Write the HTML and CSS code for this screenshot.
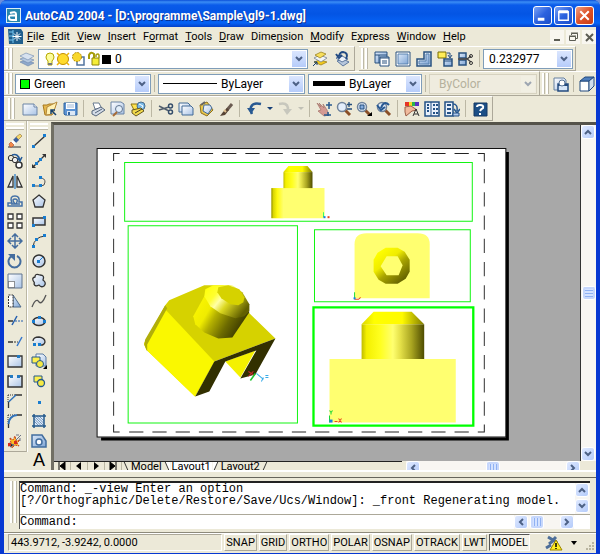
FILE: index.html
```html
<!DOCTYPE html>
<html lang="en">
<head>
<meta charset="utf-8">
<title>AutoCAD 2004 - [D:\programme\Sample\gl9-1.dwg]</title>
<link rel="stylesheet" href="styles.css">
</head>
<body>
<svg class="defs" width="0" height="0" aria-hidden="true">
  <defs>
    <linearGradient id="page" x1="0" y1="0" x2="1" y2="1"><stop offset="0" stop-color="#fff"/><stop offset="1" stop-color="#a9c3e6"/></linearGradient>
    <linearGradient id="blue" x1="0" y1="0" x2="1" y2="1"><stop offset="0" stop-color="#dbe8f8"/><stop offset="1" stop-color="#7fa5d5"/></linearGradient>
    <linearGradient id="edge"><stop offset="0" stop-color="#8c8800"/><stop offset=".15" stop-color="#d8d400"/><stop offset=".5" stop-color="#fffa10"/><stop offset="1" stop-color="#ffff70"/></linearGradient>
    <linearGradient id="cyl"><stop offset="0" stop-color="#c0bc00"/><stop offset=".08" stop-color="#f4f000"/><stop offset=".3" stop-color="#ffff20"/><stop offset=".5" stop-color="#ffff70"/><stop offset=".62" stop-color="#e4e048"/><stop offset=".8" stop-color="#a8a420"/><stop offset="1" stop-color="#4e4c00"/></linearGradient>
    <linearGradient id="cone"><stop offset="0" stop-color="#dcd800"/><stop offset=".2" stop-color="#ffff00"/><stop offset=".65" stop-color="#fffa00"/><stop offset="1" stop-color="#807c00"/></linearGradient>
    <linearGradient id="cylIso" x1="0" y1="0" x2="1" y2=".45"><stop offset="0" stop-color="#fffa00"/><stop offset=".35" stop-color="#f0ec00"/><stop offset=".5" stop-color="#b4b000"/><stop offset=".75" stop-color="#6c6a00"/><stop offset="1" stop-color="#3c3a00"/></linearGradient>
    <linearGradient id="coneIso" x1="0" y1="0" x2="1" y2=".6"><stop offset="0" stop-color="#ffff00"/><stop offset=".3" stop-color="#ffff30"/><stop offset=".45" stop-color="#ffffa8"/><stop offset=".62" stop-color="#dcd820"/><stop offset="1" stop-color="#626000"/></linearGradient>
    <linearGradient id="ring" x1=".15" y1=".1" x2=".8" y2=".9"><stop offset="0" stop-color="#ffff00"/><stop offset=".35" stop-color="#f0ec00"/><stop offset=".6" stop-color="#a8a400"/><stop offset="1" stop-color="#686600"/></linearGradient>
    <symbol id="down" viewBox="0 0 8 6"><path d="M1 1l3 3 3-3" fill="none" stroke="#4d6185" stroke-width="2"/></symbol>
    <symbol id="up" viewBox="0 0 8 6"><path d="M1 5l3-3 3 3" fill="none" stroke="#4d6185" stroke-width="2"/></symbol>
    <symbol id="left" viewBox="0 0 6 8"><path d="M5 1L2 4l3 3" fill="none" stroke="#4d6185" stroke-width="2"/></symbol>
    <symbol id="right" viewBox="0 0 6 8"><path d="M1 1l3 3-3 3" fill="none" stroke="#4d6185" stroke-width="2"/></symbol>
    <symbol id="glass" viewBox="0 0 16 16"><path d="M9 9l5 5" stroke="#8a4f28" stroke-width="3"/><circle cx="6" cy="6" r="4.5" fill="#e3eefb" stroke="#71849c" stroke-width="1.5"/></symbol>
  </defs>
</svg>
<div class="window">
  <header class="titlebar">
    <svg class="app" viewBox="0 0 15 15"><rect width="15" height="15" fill="#d9eef5"/><rect x="1" y="1" width="13" height="13" fill="#2786ac"/><path d="M4 5q6-2 6 1v6H6q-3 0-3-2.500T6 7.500h4" fill="none" stroke="#fff" stroke-width="2"/></svg>
    <h1>AutoCAD 2004 - [D:\programme\Sample\gl9-1.dwg]</h1>
    <button class="cap" aria-label="Minimize"><svg viewBox="0 0 18 18"><path d="M4 13h7" stroke="#fff" stroke-width="3"/></svg></button>
    <button class="cap" aria-label="Maximize"><svg viewBox="0 0 18 18"><path d="M4 5h10v9H4zM4 5h10" fill="none" stroke="#fff" stroke-width="1.500"/><path d="M4 5h10" stroke="#fff" stroke-width="3"/></svg></button>
    <button class="cap close" aria-label="Close"><svg viewBox="0 0 18 18"><path d="M4.500 4.500l9 9M13.500 4.500l-9 9" stroke="#fff" stroke-width="2.200"/></svg></button>
  </header>

  <nav class="menubar">
    <svg class="doc" viewBox="0 0 15 15"><path d="M0 0h13l2 3v12H1z" fill="#205f8d"/><path d="M1 3h4M1 7h5M1 11h4M5 1v13" stroke="#75c7f3"/><path d="M9 3v9M4.500 7.500h9M6 4.500l6 6M12 4.500l-6 6" stroke="#fff"/></svg>
    <button><u>F</u>ile</button><button><u>E</u>dit</button><button><u>V</u>iew</button><button><u>I</u>nsert</button><button>F<u>o</u>rmat</button><button><u>T</u>ools</button><button><u>D</u>raw</button><button>Dime<u>n</u>sion</button><button><u>M</u>odify</button><button>E<u>x</u>press</button><button><u>W</u>indow</button><button><u>H</u>elp</button>
    <span class="mdi">
      <button aria-label="Minimize drawing"><svg viewBox="0 0 14 14"><path d="M4 10h6" stroke="#5c5c54" stroke-width="2"/></svg></button>
      <button aria-label="Restore drawing"><svg viewBox="0 0 14 14"><path d="M5.500 5V3.500h6v5H10M3.500 6.500h6v4h-6zM5 3h7M3 6h7" fill="none" stroke="#5c5c54"/></svg></button>
      <button aria-label="Close drawing"><svg viewBox="0 0 14 14"><path d="M4 4l7 7M11 4l-7 7" stroke="#5c5c54" stroke-width="2"/></svg></button>
    </span>
  </nav>

  <div class="row">
    <section class="bar layers" aria-label="Layers">
      <i class="grip"></i>
      <button class="tool wide" aria-label="Layer manager"><svg viewBox="0 0 16 16"><path d="M1 11l6-2 8 3-6 3z" fill="#8fa9cc" stroke="#6985a9" stroke-width=".6"/><path d="M1 8l6-2 8 3-6 3z" fill="#b5c8e0" stroke="#6985a9" stroke-width=".6"/><path d="M1 5l6-3 8 3-6 4z" fill="#d7e2f0" stroke="#6985a9" stroke-width=".6"/></svg></button>
      <div class="combo grow">
        <svg class="states" viewBox="0 0 70 16"><path d="M5 6a4 4 0 1 1 8 0q0 2-2 4v4H7v-4Q5 8 5 6z" fill="#fdfd9b" stroke="#b5a800"/><path d="M7 13h4" stroke="#777" stroke-width="2"/><circle cx="22" cy="8" r="5.500" fill="#ffdb2c" stroke="#c18e00"/><path d="M16 2l2 2M28 2l-2 2M16 14l2-2M28 14l-2-2" stroke="#efb400" stroke-width="1.500"/><path d="M36 6h7v8h-7z" fill="#fff" stroke="#52749f" stroke-width="1.500"/><circle cx="36" cy="6" r="4.500" fill="#f8d72c" stroke="#b38b00" stroke-dasharray="2 1"/><path d="M48 8V4q2-4 5-1v4" fill="none" stroke="#a69d0b" stroke-width="2"/><path d="M51 7h7v7h-7z" fill="#f5ed37" stroke="#8f850b"/><path d="M55 6V4q2-2 3 0v3" fill="none" stroke="#a69d0b" stroke-width="1.500"/><path d="M61 4h9v9h-9z" fill="#000"/></svg>
        <select aria-label="Layer"><option>0</option></select><span class="arrow"><svg><use href="#down"/></svg></span>
      </div>
      <button class="tool wide" aria-label="Make object layer current"><svg viewBox="0 0 16 16"><path d="M2 11l6-2 7 2-6 3z" fill="#f2c91d" stroke="#907512" stroke-width=".7"/><path d="M2 7l6-3 7 3-6 4z" fill="#f2f5f7" stroke="#69778a" stroke-width=".7"/><path d="M3 4l6-3 5 2-6 4z" fill="#f7df5c" stroke="#907512" stroke-width=".7"/><path d="M1 15l4-4M2 11h3v3" stroke="#153d70" fill="none"/></svg></button>
      <button class="tool wide" aria-label="Layer previous"><svg viewBox="0 0 16 16"><path d="M3 10l6-2 6 3-6 4z" fill="#b7c7dc" stroke="#5d789e"/><path d="M2 7l6-2 6 3-6 3z" fill="#eef3fa" stroke="#5d789e"/><path d="M12 8q3-6-3-7-3 0-4 4M2 3l3 4 3-3" fill="none" stroke="#234b83" stroke-width="2"/></svg></button>
    </section>
    <section class="bar views" aria-label="Viewports">
      <i class="grip"></i>
      <button class="tool vp" aria-label="Display viewports"><svg viewBox="0 0 16 16"><path d="M1 1h12v11H1zM1 4h12M5 4v8" fill="url(#blue)" stroke="#28517f"/><path d="M6 6h9v9H6z" fill="#fff" stroke="#28517f"/><path d="M6 7h9M8 10h5M8 12h5" stroke="#28517f"/></svg></button>
      <button class="tool vp" aria-label="Single viewport"><svg viewBox="0 0 16 16"><path d="M1 1h14v14H1z" fill="#fff" stroke="#28517f"/><path d="M3 3h10v10H3z" fill="url(#blue)" stroke="#5780ae"/></svg></button>
      <button class="tool vp" aria-label="Polygonal viewport"><svg viewBox="0 0 16 16"><path d="M8 1h7v14H1V8h7z" fill="url(#page)" stroke="#28517f" stroke-width="1.500"/><path d="M10 3h3v10H3v-3h7z" fill="url(#blue)" stroke="#5780ae"/></svg></button>
      <button class="tool vp" aria-label="Convert object to viewport"><svg viewBox="0 0 16 16"><path d="M1 1h8v6H1z" fill="#ffed57" stroke="#786c00"/><path d="M7 8h8v7H7z" fill="url(#blue)" stroke="#28517f" stroke-width="1.500"/><path d="M10 2h3v4M11 4l2 3 2-3M7 10h8" fill="none" stroke="#28517f"/></svg></button>
      <button class="tool vp" aria-label="Clip viewport"><svg viewBox="0 0 16 16"><path d="M1 2h7v5H1zM1 9h7v5H1z" fill="url(#blue)" stroke="#28517f" stroke-width="1.500"/><path d="M0 8h9l4-3M8 7l5 4" fill="none" stroke="#444" stroke-width="1.300"/><circle cx="13" cy="5" r="1.500" fill="none" stroke="#333"/><circle cx="13" cy="12" r="1.500" fill="none" stroke="#333"/></svg></button>
      <i class="sep"></i>
      <div class="combo scale"><select aria-label="Viewport scale"><option>0.232977</option></select><span class="arrow"><svg><use href="#down"/></svg></span></div>
    </section>
  </div>

  <div class="row">
    <section class="bar props" aria-label="Properties">
      <i class="grip"></i>
      <div class="combo c-color"><i class="swatch"></i><select aria-label="Color"><option>Green</option></select><span class="arrow"><svg><use href="#down"/></svg></span></div>
      <i class="sep"></i>
      <div class="combo c-type"><i class="line thin"></i><select aria-label="Linetype"><option>ByLayer</option></select><span class="arrow"><svg><use href="#down"/></svg></span></div>
      <div class="combo c-weight"><i class="line thick"></i><select aria-label="Lineweight"><option>ByLayer</option></select><span class="arrow"><svg><use href="#down"/></svg></span></div>
      <i class="sep"></i>
      <div class="combo c-plot disabled"><select aria-label="Plot style" disabled><option>ByColor</option></select><span class="arrow"><svg><use href="#down"/></svg></span></div>
    </section>
    <section class="bar rest" aria-label="Views">
      <i class="grip"></i>
      <button class="tool big" aria-label="Named views"><svg viewBox="0 0 16 16"><path d="M1 2h10l2 2v10H1z" fill="url(#page)" stroke="#66809f"/><path d="M5 8h10v7H5z" fill="#d7e6f8" stroke="#234b7f" stroke-width="1.500"/><path d="M5 9h10" stroke="#234b7f" stroke-width="2"/><circle cx="9" cy="7" r="3" fill="#fff" stroke="#567294"/></svg></button>
      <i class="sep"></i>
      <button class="tool big" aria-label="Top view"><svg viewBox="0 0 16 16"><path d="M1 5h9v10H1z" fill="#fff" stroke="#234b7f"/><path d="M1 5l5-4h9l-5 4z" fill="#4e7fbd" stroke="#234b7f"/><path d="M10 5l5-4v9l-5 5z" fill="#d1dfed" stroke="#234b7f"/></svg></button>
    </section>
  </div>

  <div class="row">
    <section class="bar standard" aria-label="Standard">
      <i class="grip"></i>
      <button class="tool" aria-label="New"><svg viewBox="0 0 16 16"><path d="M1 3h11l3 3v8H1z" fill="url(#page)" stroke="#6b84a5"/><path d="M12 3v3h3" fill="#fff" stroke="#6b84a5"/></svg></button>
      <button class="tool" aria-label="Open"><svg viewBox="0 0 16 16"><path d="M1 4h4l2-1h7l-4 11H3z" fill="#e5b84e" stroke="#a8791e"/><path d="M5 6l10-5-4 12-7 1z" fill="#fff1b3" stroke="#b3883a"/><path d="M14 14L9 9M9 13V9h4" stroke="#17416f" stroke-width="1.500" fill="none"/></svg></button>
      <button class="tool" aria-label="Save"><svg viewBox="0 0 16 16"><path d="M2 2h13v12H3l-1-1z" fill="#5c93d3" stroke="#31649e"/><path d="M4 2h9v6H4z" fill="#fff"/><path d="M5 4h7M5 6h7" stroke="#9db8d7"/><path d="M5 10h8v4H5z" fill="#dbe7f5"/><path d="M6 11h2v3H6z" fill="#31649e"/></svg></button>
      <i class="sep"></i>
      <button class="tool" aria-label="Plot"><svg viewBox="0 0 16 16"><path d="M3 2h6l3 6H5z" fill="#fff" stroke="#687a8f"/><path d="M2 10l9-4 4 3-9 6-4-2z" fill="#d4dce7" stroke="#54657b"/><path d="M5 12l7-4" stroke="#54657b"/></svg></button>
      <button class="tool" aria-label="Plot preview"><svg viewBox="0 0 16 16"><path d="M1 1h10l3 2v10H1z" fill="url(#page)" stroke="#6b84a5"/><circle cx="9" cy="8" r="3.500" fill="#e3effa" stroke="#60748e"/><path d="M7 11l-4 4" stroke="#a76b37" stroke-width="2"/></svg></button>
      <button class="tool" aria-label="Publish"><svg viewBox="0 0 16 16"><path d="M1 3h6l4 6H4z" fill="#ffe34c" stroke="#8c7413"/><circle cx="11" cy="5" r="4" fill="#78b9e7" stroke="#496b8a"/><path d="M9 3l4 2-2 3" stroke="#fff" fill="none"/><path d="M2 9l9-2 3 3-8 5-4-3z" fill="#f2d94a" stroke="#655722"/><path d="M5 12l7-4" stroke="#453e20"/></svg></button>
      <i class="sep"></i>
      <button class="tool" aria-label="Cut"><svg viewBox="0 0 16 16"><path d="M1 5l10 5M1 9l10-3" stroke="#53606f" stroke-width="1.500"/><circle cx="12.500" cy="5" r="2" fill="none" stroke="#354e6b" stroke-width="1.500"/><circle cx="12.500" cy="11" r="2" fill="none" stroke="#354e6b" stroke-width="1.500"/></svg></button>
      <button class="tool" aria-label="Copy"><svg viewBox="0 0 16 16"><path d="M1 2h9l2 2v7H1z" fill="url(#page)" stroke="#426a96"/><path d="M4 5h9l2 2v7H4z" fill="url(#page)" stroke="#426a96"/></svg></button>
      <button class="tool" aria-label="Paste"><svg viewBox="0 0 16 16"><path d="M2 4l7-3 6 8-6 6-6-3z" fill="#eac64c" stroke="#8e711e"/><path d="M6 4h6l2 3-4 6-5-3z" fill="url(#page)" stroke="#426a96"/><path d="M3 4l4-3" stroke="#666" stroke-width="2"/></svg></button>
      <button class="tool" aria-label="Match properties"><svg viewBox="0 0 16 16"><path d="M14 3L9 9" stroke="#6a5b52" stroke-width="3"/><path d="M9 7l2 2-4 5-5 1 3-4z" fill="#564335"/><path d="M6 9l2 2" stroke="#e0c18f" stroke-width="2"/></svg></button>
      <i class="sep"></i>
      <button class="tool" aria-label="Undo"><svg viewBox="0 0 16 16"><path d="M15 3Q7 1 5 6q-1 3 1 7" fill="none" stroke="#285992" stroke-width="2.500"/><path d="M1 7h8l-4 6z" fill="#285992"/></svg></button>
      <button class="tool tiny" aria-label="Undo list"><svg viewBox="0 0 6 16"><path d="M0 6h6L3 9z" fill="#153f77"/></svg></button>
      <button class="tool" aria-label="Redo" disabled><svg viewBox="0 0 16 16"><path d="M2 3q8-2 9 4l-1 4" fill="none" stroke="#c7c7bd" stroke-width="2.500"/><path d="M6 8h9l-5 6z" fill="#c7c7bd"/></svg></button>
      <button class="tool tiny" aria-label="Redo list" disabled><svg viewBox="0 0 6 16"><path d="M0 6h6L3 9z" fill="#c0c0b5"/></svg></button>
      <i class="sep"></i>
      <button class="tool" aria-label="Pan"><svg viewBox="0 0 16 16"><path d="M1 2l4 4-2-4 5 5-1-4 4 6 2 5-5 1-6-5 3-1z" fill="#d49a93" stroke="#a8786f" stroke-width=".8"/><path d="M13 1v7M10 4h6M8 14h7M12 11v4" stroke="#28598f" stroke-width="1.500"/></svg></button>
      <button class="tool" aria-label="Zoom realtime"><svg viewBox="0 0 16 16"><use href="#glass"/><path d="M13 1v5M11 3.500h5M11 8h5" stroke="#244e7c" stroke-width="1.300"/></svg></button>
      <button class="tool" aria-label="Zoom window"><svg viewBox="0 0 16 16"><use href="#glass"/><path d="M4 4h4v4H4z" fill="#87aee0" stroke="#244e7c"/><path d="M11 15h5v-4z" fill="#000"/></svg></button>
      <button class="tool" aria-label="Zoom previous"><svg viewBox="0 0 16 16"><use href="#glass"/><path d="M13 4Q8-1 5 7M1 4l4 5 4-3" fill="none" stroke="#285992" stroke-width="2"/></svg></button>
      <i class="sep"></i>
      <button class="tool" aria-label="Properties"><svg viewBox="0 0 16 16"><path d="M1 1h4v4H1z" fill="#e63426"/><path d="M5 1h3v4H5z" fill="#f7dc24"/><path d="M8 1h3v4H8z" fill="#29b44e"/><path d="M11 1h4v4h-4z" fill="#5932c1"/><path d="M1 6l6-1 6 4-5 1-6 5-1-4z" fill="#f0ba9c" stroke="#9b5d45"/><path d="M9 15l3-7 3 7M10 13h4" fill="none" stroke="#333"/></svg></button>
      <button class="tool" aria-label="DesignCenter"><svg viewBox="0 0 16 16"><path d="M1 1h14v14H1z" fill="#e9f1fb" stroke="#235185" stroke-width="1.500"/><path d="M7 1v14" stroke="#235185"/><path d="M3 4h2M3 7h2M3 10h2M9 4h2M12 4h2M9 8h2M12 8h2M9 12h2M12 12h2" stroke="#235185" stroke-width="2"/></svg></button>
      <button class="tool" aria-label="Tool palettes"><svg viewBox="0 0 16 16"><path d="M1 1h8v14H1z" fill="#e9f1fb" stroke="#235185" stroke-width="1.500"/><path d="M3 4h4M3 8h4M3 12h4" stroke="#235185" stroke-width="2"/><path d="M9 3q5 0 4 7M10 8l3 4 3-4" fill="none" stroke="#285992" stroke-width="1.500"/><path d="M9 12h6v3H9z" fill="#b3cbed" stroke="#235185"/></svg></button>
      <i class="sep"></i>
      <button class="tool" aria-label="Help"><svg viewBox="0 0 16 16"><path d="M2 2h13v13H2z" fill="#1c4f86" stroke="#143962"/><path d="M5 6q0-2 3-2 4 0 3 3-2 1-3 3M8 12v2" fill="none" stroke="#fff" stroke-width="2"/></svg></button>
    </section>
  </div>

  <main class="work">
    <aside class="side modify" aria-label="Modify">
      <i class="hgrip"></i>
      <button aria-label="Erase"><svg viewBox="0 0 16 16"><path d="M1 14h13" stroke="#333"/><path d="M9 4l4-3 2 2-4 4z" fill="#f6d76a" stroke="#8b6e3e" stroke-width=".6"/><path d="M6 7l3-3 3 3-3 3z" fill="#3b5f9c"/><path d="M6 7L4 9l3 3 2-2z" fill="#fff"/><path d="M2 11l2-2 3 3-2 2H3z" fill="#f48c4b" stroke="#a34632" stroke-width=".6"/></svg></button>
      <button aria-label="Copy object"><svg viewBox="0 0 16 16" fill="none" stroke="#333"><circle cx="4" cy="5" r="2.700"/><circle cx="8" cy="7" r="2.700" fill="#eee"/><circle cx="12" cy="12" r="3" fill="#fff" stroke-width="1.500"/><path d="M5 2q6-2 8 5M10 5l3 3 2-4" stroke="#245a98" stroke-width="1.500"/></svg></button>
      <button aria-label="Mirror"><svg viewBox="0 0 16 16"><path d="M6 3v11H1zM10 3v11h5z" fill="#eef2f8" stroke="#333" stroke-width="1.300"/><path d="M8 1v15" stroke="#2f80c9" stroke-width="1.300"/></svg></button>
      <button aria-label="Offset"><svg viewBox="0 0 16 16" fill="none"><path d="M1 13v-3h4Q2 3 8 3q5 0 4 6h3v4z" stroke="#4370a6" stroke-width="1.500"/><path d="M4 11h4Q4 6 8 6q4 0 1 5h4" stroke="#4370a6" stroke-width="1.500"/></svg></button>
      <button aria-label="Array"><svg viewBox="0 0 16 16"><path d="M1 1h5v5H1zM10 1h5v5h-5zM1 10h5v5H1zM10 10h5v5h-5z" fill="#fff" stroke="#333" stroke-width="1.300"/></svg></button>
      <button aria-label="Move"><svg viewBox="0 0 16 16"><path d="M8 2v12M2 8h12M5 4l3-3 3 3M5 12l3 3 3-3M4 5L1 8l3 3M12 5l3 3-3 3" fill="none" stroke="#446d9e" stroke-width="1.500"/></svg></button>
      <button aria-label="Rotate"><svg viewBox="0 0 16 16"><path d="M5 3A6 6 0 1 0 10 3" fill="none" stroke="#446d9e" stroke-width="2"/><path d="M1 1h7v7z" fill="#446d9e"/></svg></button>
      <button aria-label="Scale"><svg viewBox="0 0 16 16"><path d="M1 1h14v14H1z" fill="url(#page)" stroke="#60758f"/><path d="M1.500 8.500h6v6h-6z" fill="#fff" stroke="#333" stroke-dasharray="1 1"/></svg></button>
      <button aria-label="Stretch"><svg viewBox="0 0 16 16"><path d="M6 2l8 12H6z" fill="url(#blue)" stroke="#4f6b8b"/><path d="M1.500 2H6v12H1.500z" fill="#fff" stroke="#333" stroke-dasharray="2 1"/></svg></button>
      <button aria-label="Trim"><svg viewBox="0 0 16 16"><path d="M1 8h5" stroke="#333" stroke-width="1.500"/><path d="M8 8h8" stroke="#245fae" stroke-dasharray="2 1"/><path d="M5 12l5-9" stroke="#245fae" stroke-width="1.500"/></svg></button>
      <button aria-label="Extend"><svg viewBox="0 0 16 16"><path d="M1 9h5" stroke="#333" stroke-width="1.500"/><path d="M7 9h4" stroke="#333" stroke-dasharray="2 1"/><path d="M10 13l5-9" stroke="#3476cc" stroke-width="1.500"/></svg></button>
      <button aria-label="Break at point"><svg viewBox="0 0 16 16"><path d="M1 3h14v11H1z" fill="url(#page)" stroke="#333" stroke-width="1.300"/><path d="M10 2h3v3h-3z" fill="#247ac0"/></svg></button>
      <button aria-label="Break"><svg viewBox="0 0 16 16"><path d="M4 3H1v11h14V3h-3" fill="url(#page)" stroke="#333" stroke-width="1.500"/><path d="M3 2h3v3H3zM10 2h3v3h-3z" fill="#247ac0"/></svg></button>
      <button aria-label="Chamfer"><svg viewBox="0 0 16 16" fill="none"><path d="M1 2h8M1 2v8" stroke="#333" stroke-dasharray="1 1"/><path d="M1.500 9v6M8 2h7" stroke="#333" stroke-width="1.300"/><path d="M1.500 9L9 2" stroke="#3072ba" stroke-width="1.500"/></svg></button>
      <button aria-label="Fillet"><svg viewBox="0 0 16 16" fill="none"><path d="M1 2h8M1 2v8" stroke="#333" stroke-dasharray="1 1"/><path d="M1.500 10v5M10 2h5" stroke="#333" stroke-width="1.300"/><path d="M1.500 11Q2 3 10 2" stroke="#3072ba" stroke-width="2"/></svg></button>
      <button aria-label="Explode"><svg viewBox="0 0 16 16"><path d="M3 5l3 2 2-4 1 5 4-1-3 3 2 3-4-1-3 3v-3l-4 1 3-3z" fill="#ffbd22" stroke="#c33e21" stroke-dasharray="2 1"/><path d="M9 7l5-5M9 2h3M13 5v3M2 10l5 2-4 2" stroke="#6e7588"/><path d="M1 10h3v3H1zM7 8h3v3H7z" fill="#d52d1f"/></svg></button>
    </aside>
    <aside class="side draw" aria-label="Draw">
      <i class="hgrip"></i>
      <button aria-label="Line"><svg viewBox="0 0 16 16"><path d="M3 13L14 3" stroke="#333" stroke-width="1.300"/><path d="M1 12h3v3H1zM12 1h3v3h-3z" fill="#187dd0"/></svg></button>
      <button aria-label="Construction line"><svg viewBox="0 0 16 16"><path d="M2 14L14 2" stroke="#333" stroke-width="1.300"/><path d="M1 15v-4l4 4zM15 1v4l-4-4z" fill="#333"/><path d="M4 9h3v3H4zM8 5h3v3H8z" fill="#187dd0"/></svg></button>
      <button aria-label="Polyline"><svg viewBox="0 0 16 16"><path d="M3 13h7q4 0 4-4t-5-4" fill="none" stroke="#555"/><path d="M1 11h3v3H1zM8 11h3v3H8zM8 3h3v3H8z" fill="#187dd0"/></svg></button>
      <button aria-label="Polygon"><svg viewBox="0 0 16 16"><path d="M8 2l6 5-2 7H4L2 7z" fill="url(#page)" stroke="#333" stroke-width="1.300"/></svg></button>
      <button aria-label="Rectangle"><svg viewBox="0 0 16 16"><path d="M2 5h12v7H2z" fill="url(#page)" stroke="#333" stroke-width="1.500"/><path d="M1 11h3v3H1zM12 3h3v3h-3z" fill="#187dd0"/></svg></button>
      <button aria-label="Arc"><svg viewBox="0 0 16 16"><path d="M2 14Q3 4 14 3" fill="none" stroke="#333"/><path d="M1 12h3v3H1zM4 5h3v3H4zM12 1h3v3h-3z" fill="#187dd0"/></svg></button>
      <button aria-label="Circle"><svg viewBox="0 0 16 16"><circle cx="8" cy="8" r="6" fill="url(#page)" stroke="#333" stroke-width="1.500"/><path d="M8 8l4-4" stroke="#187dd0"/><path d="M6 7h3v3H6z" fill="#187dd0"/></svg></button>
      <button aria-label="Revision cloud"><svg viewBox="0 0 16 16"><path d="M3 9q-3-4 1-5 0-4 5-2 5 0 3 5 4 3 1 6-3 2-5-1-4 2-5-1 1-1 0-2z" fill="url(#page)" stroke="#333" stroke-width="1.300"/></svg></button>
      <button aria-label="Spline"><svg viewBox="0 0 16 16"><path d="M1 14q4-10 7-5 3 3 7-7" fill="none" stroke="#555" stroke-width="1.300"/></svg></button>
      <button aria-label="Ellipse"><svg viewBox="0 0 16 16"><ellipse cx="8" cy="8.500" rx="6" ry="4" fill="url(#page)" stroke="#333" stroke-width="1.500"/><path d="M1 7h3v3H1zM12 7h3v3h-3zM7 3h3v3H7z" fill="#187dd0"/></svg></button>
      <button aria-label="Ellipse arc"><svg viewBox="0 0 16 16"><path d="M2 8q0-4 6-4 6 1 6 5-1 4-6 3" fill="url(#page)" stroke="#333" stroke-width="1.300"/><path d="M2 10h3v3H2zM7 10h3v3H7z" fill="#187dd0"/></svg></button>
      <button aria-label="Insert block"><svg viewBox="0 0 16 16"><path d="M5 1h7l3 3v9H5z" fill="url(#page)" stroke="#5c7da5"/><path d="M1 4h8v6H1z" fill="#fff14d" stroke="#24598c"/><circle cx="9" cy="11" r="3.500" fill="#f5e943" stroke="#24598c"/><path d="M12 16h4v-4z"/></svg></button>
      <button aria-label="Make block"><svg viewBox="0 0 16 16"><path d="M3 3h8v6H3z" fill="#fff14d" stroke="#24598c"/><circle cx="10" cy="10" r="3.500" fill="#f5e943" stroke="#24598c" stroke-width="1.300"/></svg></button>
      <button aria-label="Point"><svg viewBox="0 0 16 16"><path d="M7 8h3v3H7z" fill="#187dd0"/></svg></button>
      <button aria-label="Hatch"><svg viewBox="0 0 16 16"><path d="M3 3h10v10H3z" fill="#dce9f7"/><path d="M3 3l10 10M3 8l5 5M8 3l5 5M3 5.500l7.500 7.500M5.500 3l7.500 7.500" stroke="#5b82ae" stroke-width=".8"/><path d="M1 3h14M1 13h14M3 1v14M13 1v14" stroke="#24598c" stroke-width="1.500"/></svg></button>
      <button aria-label="Region"><svg viewBox="0 0 16 16"><path d="M1 2h10l4 6v6H1z" fill="url(#blue)" stroke="#426d9e" stroke-width="1.500"/><circle cx="8" cy="9" r="3" fill="#fff" stroke="#426d9e" stroke-width="1.500"/></svg></button>
      <button class="text-tool" aria-label="Multiline text">A</button>
    </aside>

    <div class="viewer">
      <div class="canvas">
        <svg viewBox="54 125 525 335" role="img" aria-label="Layout with four viewports of a clamp part">
          <path d="M101 438.500h405.500V152" fill="none" stroke="#000" stroke-width="3"/>
          <path d="M97 148.500h408v288H97z" fill="#fff" stroke="#111"/>
          <path d="M113.500 161v-7.500h6M477 153.500h6.500v8M113.500 424v7.500h6M477 431.500h6.500V424" fill="none" stroke="#222"/>
          <path d="M129 153.500h344M129 431.500h344" stroke="#222" stroke-dasharray="14.200 9"/>
          <path d="M113.500 169v251M483.500 169v251" stroke="#333" stroke-dasharray="14.200 9"/>
          <g fill="none" stroke="#12f512"><path d="M124.500 162.500h347v58.500h-347zM128 225.500h169v197H128zM314 229.500h155.500v72H314z"/><path d="M313 307h159.500v118H313z" stroke="#00ff00" stroke-width="2.300"/></g>

          <path d="M271 188h53v30h-53z" fill="#ffff70"/><path d="M271 188h12v30h-12z" fill="url(#edge)"/>
          <path d="M283 172h29v16h-29z" fill="url(#cyl)"/><path d="M283 172l5-6h19l5 6z" fill="url(#cone)"/>
          <path d="M323 217v-5" stroke="#3f6"/><path d="M323 216h2v2h-2z" fill="#167be8"/><path d="M327 216h2v2h-2z" fill="#e8451d"/>

          <path d="M144 343l21-38 4-5 35-15h27l18 28 26 25-61 23-19 35-49-47z" fill="#d6d200"/>
          <path d="M164 308l50 53-19.500 35L148 351q-4-5-4-8z" fill="#faf800"/>
          <path d="M144 344l1-5 20-34 2 3-20 36v7z" fill="#b1ae0a"/>
          <path d="M225 361l30-11-15 27z" fill="#f4f100"/>
          <path d="M214 361l61-23-20 36-15 4 16-28-31 11-16 30-14 5z" fill="#323000"/>
          <path d="M204 296l-11 20 2 8 9 8 14 6 14-1 17-25z" fill="url(#cylIso)"/>
          <path d="M204 296l1-7 8-4h19l10 7 7 12v7l-5 5-9 2-15-5-10-7z" fill="url(#coneIso)"/>
          <path d="M218 287l10-2 11 4 5 8-1 5-5 3-8-1-9-6-4-6z" fill="#d6d200"/>
          <path d="M248 371l6 4M253 371l-5 5" stroke="#c7282b"/><path d="M250 380l5-7" stroke="#1bc52d" stroke-width="1.500"/><path d="M256 373l7 6M263 377l-2 4M265 375h3M265 377h3" stroke="#38abe8"/>

          <path d="M354 298v-54q0-11 12-11h51q12 0 12 11v54z" fill="#ffff70"/>
          <path d="M385 247.500h12l7 4 5 8v12l-4 7-8 5h-12l-7-4-5-8v-12l4-7z" fill="url(#ring)"/><path d="M386 256h11l5 9-4 10h-12l-6-9z" fill="#ffff70"/>
          <path d="M354 299v-7" stroke="#20db42"/><path d="M354 299h4l2-2" stroke="#e9471c" fill="none"/><path d="M353 297h2v2h-2z" fill="#167be8"/>

          <path d="M329 358.500h126v63.500H329z" fill="#ffff70"/><path d="M361 324h62.500v34.500H361z" fill="url(#cyl)"/><path d="M361 324l12-12.500h38L423.500 324z" fill="url(#cone)"/>
          <path d="M329 422v-7M329 410l1.500 2 1.500-2M330.500 412v2" stroke="#15d735" fill="none"/><path d="M329 419h3v3h-3z" fill="#167be8"/><path d="M334 421h3M338 418l3 4M341 418l-3 4" stroke="#e9471c"/>
        </svg>
      </div>
      <div class="vscroll"><button class="sb" aria-label="Scroll up"><svg><use href="#up"/></svg></button><span class="track"><i class="thumb"></i></span><button class="sb" aria-label="Scroll down"><svg><use href="#down"/></svg></button></div>
      <div class="tabs">
        <div class="navs"><button aria-label="First tab"><svg viewBox="0 0 8 8"><path d="M1 0v8M7 0v8L2 4z" stroke="#000"/></svg></button><button aria-label="Previous tab"><svg viewBox="0 0 8 8"><path d="M6 0v8L1 4z"/></svg></button><button aria-label="Next tab"><svg viewBox="0 0 8 8"><path d="M2 0v8l5-4z"/></svg></button><button aria-label="Last tab"><svg viewBox="0 0 8 8"><path d="M1 0v8l5-4zM7 0v8" stroke="#000"/></svg></button></div>
        <svg class="edge" viewBox="0 0 6 9"><path d="M1 0l4 9" stroke="#222"/></svg><button>Model</button>
        <svg class="edge" viewBox="0 0 6 9"><path d="M1 0h6v9H5z" fill="#fff"/><path d="M1 0l4 9" stroke="#222"/></svg><button class="on">Layout1</button>
        <svg class="edge" viewBox="0 0 6 9"><path d="M-1 0h6L1 9h-2z" fill="#fff"/><path d="M5 0L1 9" stroke="#222"/></svg><button>Layout2</button>
        <svg class="edge" viewBox="0 0 6 9"><path d="M5 0L1 9" stroke="#222"/></svg>
        <i class="rule"></i>
        <div class="hscroll"><button class="sb" aria-label="Scroll left"><svg class="h"><use href="#left"/></svg></button><span class="track"><i class="thumb"></i></span><button class="sb" aria-label="Scroll right"><svg class="h"><use href="#right"/></svg></button></div>
      </div>
    </div>
  </main>

  <section class="command" aria-label="Command line">
    <i class="grip"></i>
    <div class="console">
      <div class="history"><pre>Command: _-view Enter an option
[?/Orthographic/Delete/Restore/Save/Ucs/Window]: _front Regenerating model.</pre>
        <div class="vscroll mini"><button class="sb" aria-label="History up"><svg><use href="#up"/></svg></button><button class="sb" aria-label="History down"><svg><use href="#down"/></svg></button></div>
      </div>
      <div class="prompt"><label for="cmd">Command:</label><input id="cmd" type="text">
        <div class="hscroll mini"><button class="sb" aria-label="Prompt left"><svg class="h"><use href="#left"/></svg></button><i class="thumb"></i><span class="track"></span><button class="sb" aria-label="Prompt right"><svg class="h"><use href="#right"/></svg></button></div>
      </div>
    </div>
  </section>

  <footer class="status">
    <output>443.9712, -3.9242, 0.0000</output>
    <button>SNAP</button><button>GRID</button><button>ORTHO</button><button>POLAR</button><button>OSNAP</button><button>OTRACK</button><button>LWT</button><button class="pressed">MODEL</button>
    <span class="tray"><svg viewBox="0 0 20 16"><path d="M4 2l5 3 3-3M5 9l5-4 3 3M2 13l5-3" stroke="#4d6e99" stroke-width="3" fill="none"/><path d="M12 5l6 10H6z" fill="#ffef21" stroke="#9c8500"/><path d="M12 8v4M12 13v1" stroke="#000" stroke-width="1.500"/></svg></span>
    <button class="more" aria-label="Tray menu"><svg viewBox="0 0 6 4"><path d="M0 0h6L3 4z"/></svg></button>
    <svg class="size" viewBox="0 0 10 10"><path d="M7 1h2v2H7zM4 4h2v2H4zM7 4h2v2H7zM1 7h2v2H1zM4 7h2v2H4zM7 7h2v2H7z" fill="#b8b49f"/></svg>
  </footer>
</div>
</body>
</html>
```
FILE: styles.css
```css
* { box-sizing: border-box; }
body { margin: 0; background: #6b8fdc; font: 11px/14px Roboto, "Liberation Sans", sans-serif; color: #000; }
button, select, input { font: inherit; color: inherit; margin: 0; padding: 0; border: 0; background: none; border-radius: 0; outline: 0; }
svg { display: block; flex: none; }
i { display: block; flex: none; }
.defs { position: absolute; }

.window { min-height: 100vh; display: flex; flex-direction: column; padding: 0 4px 4px; background: #0738d2; border-radius: 7px 7px 0 0; overflow: hidden; }

.titlebar { height: 27px; margin: 0 -4px; padding: 4px 6px 0; display: flex; align-items: center; gap: 2px; background: linear-gradient(#0b4fd8, #3b8df5 2px, #0a5bea 5px, #0455e4 14px, #0662f5 23px, #0440c8); }
.titlebar .app { width: 15px; height: 15px; }
.titlebar h1 { flex: 1; min-width: 0; margin: 0 0 0 2px; font: bold 12px/18px Roboto, sans-serif; color: #fff; text-shadow: 1px 1px #0a2f91; white-space: nowrap; overflow: hidden; }
.cap { width: 19px; height: 19px; border: 1px solid #fff; border-radius: 3px; background: linear-gradient(135deg, #7ba3f5, #2c62df 50%, #1c4ec8); }
.cap.close { background: linear-gradient(135deg, #f0a083, #dd5228 50%, #c83c14); }
.cap svg { width: 17px; height: 17px; }

.menubar { height: 19px; padding-left: 4px; display: flex; align-items: center; gap: 7px; background: #ece9d8; }
.menubar .doc { width: 15px; height: 15px; margin-right: -3px; }
.mdi { margin-left: auto; display: flex; gap: 2px; }
.mdi button { width: 14px; height: 14px; background: #f8f6f0; }

.row { display: flex; gap: 4px; height: 25px; background: #ece9d8; }
.bar { display: flex; align-items: center; padding: 0 2px; border-top: 1px solid #fff; border-right: 1px solid #aca899; border-bottom: 1px solid #aca899; }
.grip { width: 6px; height: 21px; border: solid #fff; border-width: 0 2px; box-shadow: 1px 0 #bdb9a8, inset 1px 0 #bdb9a8; }
.sep { width: 1px; height: 17px; background: #bbb7a4; }
.tool { flex: none; width: 20px; height: 20px; display: grid; place-items: center; }
.tool svg { width: 16px; height: 16px; }
.tool.tiny { width: 11px; }
.tool.tiny svg { width: 6px; }
.tool.wide, .tool.vp { width: 21px; }
.tool.big { width: 25px; }

.combo { display: flex; align-items: center; height: 20px; background: #fff; border: 1px solid #7f9db9; padding: 1px; min-width: 0; }
.combo select { appearance: none; flex: 1; min-width: 0; height: 16px; padding-left: 4px; font-size: 12px; opacity: 1; }
.arrow { flex: none; width: 14px; height: 16px; display: grid; place-items: center; background: linear-gradient(#dbe6fe, #b6ccfa); pointer-events: none; }
.arrow svg, .sb svg { width: 8px; height: 6px; }
.sb svg.h { width: 6px; height: 8px; }
.combo .states { width: 70px; height: 16px; margin-left: 1px; }
.combo.disabled { background: #efecdf; border-color: #d6d2c0; color: #b5b19d; }
.combo.disabled .arrow { background: #f4f2e8; opacity: .5; }
.combo.disabled select { padding-left: 8px; }
.swatch { width: 10px; height: 10px; margin-left: 3px; background: #0f0; border: 1px solid #000; }
.line { margin-left: 3px; background: #000; }
.thin { width: 54px; height: 1px; }
.thick { width: 32px; height: 5px; }

.layers { flex: 0 1 351px; gap: 1px; }
.layers .grip { margin-right: 3px; }
.layers .grow { flex: 1; }
.views .grip { margin-right: 4px; }
.views .sep { margin: 0 3px; }
.scale { width: 90px; }
.props { gap: 3px; }
.c-color { width: 136px; }
.c-type { width: 147px; }
.c-weight { width: 114px; }
.c-plot { width: 108px; }
.rest { flex: 1; min-width: 0; overflow: hidden; border-right: 0; }
.row:has(.rest) { gap: 0; }
.standard .grip { margin: 0 6px 0 2px; }
.standard .sep { margin: 0 4px 0 3px; }

.work { flex: 1; display: flex; min-height: 0; background: #ece9d8; }
.side { flex: none; display: flex; flex-direction: column; align-items: center; align-self: flex-start; width: 23px; padding-top: 2px; border-right: 1px solid #bbb7a4; border-bottom: 1px solid #aca899; box-shadow: 1px 0 #fff; }
.side.draw { width: 24px; border: 0; box-shadow: none; }
.hgrip { width: 18px; height: 6px; margin-bottom: 2px; border: solid #fff; border-width: 2px 0; box-shadow: 0 1px #bdb9a8; }
.side button { width: 20px; height: 20px; display: grid; place-items: center; }
.side svg { width: 16px; height: 16px; }
.side .text-tool { height: 17px; font: 18px/18px "Liberation Sans", sans-serif; }

.viewer { flex: 1; min-width: 0; display: grid; grid-template: 1fr 9px / 1fr 15px; border-left: 3px solid #716f64; border-top: 3px solid #55534a; margin-top: 1px; }
.canvas { background: #a8a8a8; border-right: 1px solid #333; overflow: hidden; }
.canvas svg { width: 100%; height: auto; }
.track { flex: 1; background: #f8f6f2; display: flex; align-items: center; justify-content: center; }
.sb, .thumb { flex: none; width: 14px; height: 14px; display: grid; place-items: center; border: 1px solid #fff; border-radius: 3px; background: linear-gradient(135deg, #dfe9ff, #b4cbfa); }
.thumb { background: repeating-linear-gradient(90deg, #8fb1f3 0 1px, #d4e2ff 1px 3px); box-shadow: inset 0 0 0 2px #c6d7fc; }
.vscroll { display: flex; flex-direction: column; background: #f8f6f2; }
.vscroll .thumb { background: repeating-linear-gradient(#8fb1f3 0 1px, #d4e2ff 1px 3px); }
.tabs { grid-column: 1 / 3; display: flex; align-items: flex-start; height: 9px; overflow: hidden; background: #ece9d8; line-height: 9px; }
.tabs > button.on { background: #fff; }
.tabs > button, .edge, .navs, .rule { border-top: 1px solid #222; }
.rule { flex: 1; margin-right: 4px; }
.tabs > button { padding: 0 1px; height: 10px; }
.edge { width: 8px; height: 9px; }
.navs { display: flex; }
.navs button { width: 17px; height: 9px; display: grid; place-items: center; border-right: 1px solid #bbb7a4; }
.navs svg { width: 8px; height: 8px; }
.tabs .hscroll { width: 174px; margin-right: 16px; display: flex; background: #f8f6f2; }

.command { flex: none; display: flex; gap: 3px; height: 62px; padding: 9px 6px 3px 6px; background: #ece9d8; border-top: 2px solid #fff; box-shadow: inset 0 5px #ece9d8, inset 0 6px #66645a; }
.command .grip { height: 42px; }
.console { flex: 1; min-width: 0; border-top: 2px solid #222; border-left: 1px solid #555; font: 12px/12px "Liberation Mono", monospace; background: #fff; }
.history { display: flex; height: 32px; border-bottom: 1px solid #aca899; }
.history pre { flex: 1; min-width: 0; margin: 0; font: inherit; overflow: hidden; }
.prompt { display: flex; align-items: center; height: 15px; margin-right: 16px; }
.prompt input { flex: 1; min-width: 0; height: 14px; }
.vscroll.mini { width: 15px; gap: 2px; }
.hscroll.mini { width: 60px; gap: 2px; display: flex; background: #f8f6f2; }

.status { flex: none; display: flex; align-items: center; gap: 2px; height: 21px; padding: 2px 1px 2px 4px; background: #ece9d8; border-top: 1px solid #8d8a7b; box-shadow: inset 0 1px #fff; }
.status output { flex: 1; height: 17px; padding: 1px 2px; border: 1px solid; border-color: #aca899 #fff #fff #aca899; white-space: nowrap; }
.status button { flex: none; height: 17px; padding: 0 1px; border: 1px solid; border-color: #fff #aca899 #aca899 #fff; }
.status button.pressed { border-color: #555 #fff #fff #555; background: #f5f3ea; }
.tray { margin-left: 12px; }
.tray svg { width: 20px; height: 16px; }
.status button.more { width: 8px; border: 0; margin-left: 4px; }
.more svg { width: 6px; height: 4px; }
.size { width: 10px; height: 10px; margin-left: 5px; align-self: flex-end; }
```
